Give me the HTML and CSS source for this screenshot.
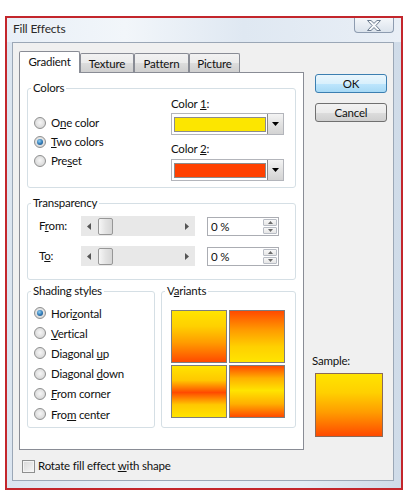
FILE: index.html
```html
<!DOCTYPE html>
<html>
<head>
<meta charset="utf-8">
<title>Fill Effects</title>
<link rel="stylesheet" href="styles.css">
</head>
<body>
<div class="window">
  <div class="titlebar">
    <span class="title">Fill Effects</span>
    <div class="close">
      <svg width="14" height="11" viewBox="0 0 14 11"><polygon points="0.5,0.5 4,0.5 7,3.4 10,0.5 13.5,0.5 8.9,5.5 13.5,10.5 10,10.5 7,7.6 4,10.5 0.5,10.5 5.1,5.5" fill="#f7f9fb" stroke="#6d7c90" stroke-width="1"/></svg>
    </div>
  </div>
  <div class="client">
    <div class="main">
      <div class="tabs">
        <div class="tab active">Gradient</div>
        <div class="tab t-texture">Texture</div>
        <div class="tab t-pattern">Pattern</div>
        <div class="tab t-picture">Picture</div>
      </div>
      <div class="panel">
        <fieldset class="group colors">
          <legend>Colors</legend>
          <div class="colors-body">
            <div class="radios">
              <div class="radio-row"><span class="radio"></span><span>O<u>n</u>e color</span></div>
              <div class="radio-row"><span class="radio checked"></span><span><u>T</u>wo colors</span></div>
              <div class="radio-row"><span class="radio"></span><span>Pre<u>s</u>et</span></div>
            </div>
            <div class="pickers">
              <div class="plabel">Color <u>1</u>:</div>
              <div class="combo">
                <div class="swatch yellow"></div>
                <div class="drop"><svg width="7" height="4" viewBox="0 0 7 4"><path d="M0 0h7L3.5 4z" fill="#000"/></svg></div>
              </div>
              <div class="plabel second">Color <u>2</u>:</div>
              <div class="combo combo2">
                <div class="swatch red"></div>
                <div class="drop"><svg width="7" height="4" viewBox="0 0 7 4"><path d="M0 0h7L3.5 4z" fill="#000"/></svg></div>
              </div>
            </div>
          </div>
        </fieldset>

        <fieldset class="group transparency">
          <legend>Transparency</legend>
          <div class="trows">
            <div class="trow">
              <span class="tlabel">F<u>r</u>om:</span>
              <div class="slider">
                <svg class="arr-l" width="4" height="7" viewBox="0 0 4 7"><path d="M4 0v7L0 3.5z" fill="#555"/></svg>
                <span class="thumb"></span>
                <svg class="arr-r" width="4" height="7" viewBox="0 0 4 7"><path d="M0 0v7L4 3.5z" fill="#555"/></svg>
              </div>
              <div class="spin">
                <span class="spin-text">0 %</span>
                <div class="spin-btns">
                  <span class="sb"><svg width="5" height="3" viewBox="0 0 5 3"><path d="M0 3h5L2.5 0z" fill="#6a6a6a"/></svg></span>
                  <span class="sb"><svg width="5" height="3" viewBox="0 0 5 3"><path d="M0 0h5L2.5 3z" fill="#6a6a6a"/></svg></span>
                </div>
              </div>
            </div>
            <div class="trow second">
              <span class="tlabel">T<u>o</u>:</span>
              <div class="slider">
                <svg class="arr-l" width="4" height="7" viewBox="0 0 4 7"><path d="M4 0v7L0 3.5z" fill="#555"/></svg>
                <span class="thumb"></span>
                <svg class="arr-r" width="4" height="7" viewBox="0 0 4 7"><path d="M0 0v7L4 3.5z" fill="#555"/></svg>
              </div>
              <div class="spin">
                <span class="spin-text">0 %</span>
                <div class="spin-btns">
                  <span class="sb"><svg width="5" height="3" viewBox="0 0 5 3"><path d="M0 3h5L2.5 0z" fill="#6a6a6a"/></svg></span>
                  <span class="sb"><svg width="5" height="3" viewBox="0 0 5 3"><path d="M0 0h5L2.5 3z" fill="#6a6a6a"/></svg></span>
                </div>
              </div>
            </div>
          </div>
        </fieldset>

        <div class="bottom-row">
          <fieldset class="group shading">
            <legend>Shading styles</legend>
            <div class="radios2">
              <div class="radio-row r2"><span class="radio checked"></span><span>Hori<u>z</u>ontal</span></div>
              <div class="radio-row r2"><span class="radio"></span><span><u>V</u>ertical</span></div>
              <div class="radio-row r2"><span class="radio"></span><span>Diagonal <u>u</u>p</span></div>
              <div class="radio-row r2"><span class="radio"></span><span>Diagonal <u>d</u>own</span></div>
              <div class="radio-row r2"><span class="radio"></span><span><u>F</u>rom corner</span></div>
              <div class="radio-row r2"><span class="radio"></span><span>Fro<u>m</u> center</span></div>
            </div>
          </fieldset>
          <fieldset class="group variants">
            <legend>V<u>a</u>riants</legend>
            <div class="tiles">
              <div class="tile v1"></div>
              <div class="tile v2"></div>
              <div class="tile v3"></div>
              <div class="tile v4"></div>
            </div>
          </fieldset>
        </div>
      </div>
      <div class="check"><span class="cbox"></span><span>Rotate fill effect <u>w</u>ith shape</span></div>
    </div>
    <div class="side">
      <div class="btn default">OK</div>
      <div class="btn cancel">Cancel</div>
      <div class="sample-label">Sample:</div>
      <div class="sample"></div>
    </div>
  </div>
</div>
</body>
</html>
```

FILE: styles.css
```css
* { box-sizing: border-box; }
html, body { margin: 0; padding: 0; background: #fff; }
body {
  width: 418px; height: 498px; overflow: hidden;
  font-family: Lato, "Noto Sans", sans-serif;
  font-size: 11.5px; letter-spacing: -0.2px; color: #111;
}
u { text-decoration: underline; text-decoration-thickness: 1px; text-underline-offset: 1px; }

.window {
  margin: 16px 0 0 5px;
  width: 398px; height: 474px;
  border: 2px solid #c3262c;
  padding: 0 7px 7px 5px;
  background: linear-gradient(to right, #dbe5f0 0, #ecf2f8 40%, #e4ecf4 75%, #cfdbe8 100%);
  display: flex; flex-direction: column;
}
.titlebar {
  height: 24px; flex: none;
  display: flex; align-items: flex-start;
  background: linear-gradient(to right, #e8eff7, #f2f6fa 30%, #dfe8f2 60%, #e9eff6);
  margin: 0 -7px 0 -5px; padding: 0 7px 0 6px;
}
.title { line-height: 21px; font-size: 12px; color: #2a2a2a; text-shadow: 0 0 6px #fff; }
.close {
  margin-left: auto; width: 40px; height: 15px;
  border: 1px solid #8d9cb0; border-top: none;
  border-radius: 0 0 4px 4px;
  background: linear-gradient(to bottom, #f4f7fa, #dbe3ec);
  display: flex; align-items: center; justify-content: center;
}

.client {
  width: 382px; height: 439px; flex: none;
  border: 1px solid #9ba7b6;
  background: #f0f0f0;
  padding: 0 6px;
  display: flex; gap: 8px;
}
.main { width: 285px; display: flex; flex-direction: column; }

.tabs { display: flex; align-items: flex-end; margin-top: 8px; height: 21px; }
.tab {
  height: 19px; padding-top: 1px;
  border: 1px solid #898c95; border-bottom: none;
  background: linear-gradient(to bottom, #f2f2f2, #ebebeb 50%, #dddddd 51%, #cfcfcf);
  text-align: center; line-height: 17px;
  border-radius: 2px 2px 0 0;
}
.tab.active {
  width: 61px; height: 22px; padding-top: 0;
  background: #fff; line-height: 20px;
  margin-bottom: -1px; position: relative; z-index: 1;
}
.t-texture { width: 54px; }
.t-pattern { width: 55px; }
.t-picture { width: 51px; }

.panel {
  width: 285px; height: 378px;
  border: 1px solid #898c95; background: #fff;
  padding: 8px 7px 0;
}

.group {
  margin: 0; padding: 0; min-width: 0;
  border: 1px solid #d5dfe5; border-radius: 3px;
}
.group legend { margin-left: 3px; padding: 0 2px; line-height: 14px; }

.colors-body { display: grid; grid-template-columns: 143px 1fr; height: 92px; }
.radios { padding: 18px 0 0 6px; }
.radio-row { height: 19px; display: flex; align-items: center; gap: 5px; }
.radio {
  width: 12px; height: 12px; border-radius: 50%; flex: none;
  border: 1px solid #8e8f8f;
  background: radial-gradient(circle at 50% 45%, #f6f6f6 0, #dedede 60%, #cdcdcd 100%);
  display: flex; align-items: center; justify-content: center;
}
.radio.checked::after {
  content: ""; width: 6px; height: 6px; border-radius: 50%;
  background: radial-gradient(circle at 40% 35%, #8fd0f5 0, #2f77b3 55%, #174a7c 100%);
}

.pickers { padding-top: 2px; }
.plabel { line-height: 14px; }
.plabel.second { margin-top: 7px; }
.combo {
  width: 113px; height: 22px; margin-top: 2px;
  border: 1px solid #b3b5bb; background: #fff;
  display: flex; align-items: stretch;
}
.combo2 { margin-top: 3px; }
.swatch { flex: 1; margin: 3px 1px 2px 2px; border: 1px solid #8c8c8c; }
.swatch.yellow { background: #fce600; }
.swatch.red { background: #ff4100; }
.drop {
  width: 16px; flex: none;
  border-left: 1px solid #8a8a8a;
  background: linear-gradient(to bottom, #f4f4f4, #e2e2e2 50%, #d3d3d3);
  display: flex; align-items: center; justify-content: center;
}

.transparency { margin-top: 8px; }
.trows { padding: 6px 0 13px 11px; }
.trow { display: grid; grid-template-columns: 42px 114px 72px; height: 20px; align-items: center; }
.trow.second { margin-top: 10px; }
.tlabel { line-height: 14px; }
.slider {
  height: 20px; background: #e8e8e8;
  display: flex; align-items: center;
  padding: 0 6px;
}
.thumb {
  width: 15px; height: 17px; margin-left: 7px;
  border: 1px solid #979797; border-radius: 2px;
  background: linear-gradient(to right, #f6f6f6, #e3e3e3 50%, #d6d6d6);
}
.arr-r { margin-left: auto; }
.spin {
  width: 72px; height: 19px; margin-left: 12px;
  border: 1px solid #abadb3; background: #fff;
  display: flex; align-items: stretch;
}
.spin-text { flex: 1; padding-left: 3px; line-height: 17px; }
.spin-btns { width: 15px; display: flex; flex-direction: column; padding: 1px 1px 1px 0; gap: 1px; }
.sb {
  flex: 1; border: 1px solid #b8bcc4; border-radius: 1px;
  background: linear-gradient(to bottom, #f7f7f7, #e6e6e6);
  display: flex; align-items: center; justify-content: center;
}

.bottom-row { display: flex; gap: 6px; margin-top: 4px; height: 144px; }
.shading { width: 128px; flex: none; }
.variants { flex: 1; }
.radios2 { padding: 5px 0 0 6px; }
.radio-row.r2 { height: 20.2px; }

.tiles {
  display: grid; grid-template-columns: 56px 56px; grid-template-rows: 53px 53px;
  gap: 2px; padding: 12px 0 0 9px;
}
.tile { border: 1px solid #7d7d7d; }
.v1 { background: linear-gradient(to bottom, #ffe400 0%, #ffd000 30%, #ff9c00 62%, #ff4a00 100%); }
.v2 { background: linear-gradient(to bottom, #ff4a00 0%, #ff9c00 38%, #ffd000 70%, #ffe400 100%); }
.v3 { background: linear-gradient(to bottom, #ffe400 0%, #ffc800 28%, #ff4a00 52%, #ffc800 76%, #ffe400 100%); }
.v4 { background: linear-gradient(to bottom, #ff4a00 0%, #ffb000 24%, #ffe400 48%, #ffb000 74%, #ff4a00 100%); }

.check { margin-top: 9px; padding-left: 3px; display: flex; align-items: center; gap: 3px; line-height: 14px; }
.cbox {
  width: 13px; height: 13px; flex: none;
  border: 1px solid #8e8f8f;
  background: linear-gradient(135deg, #d8d8d8, #f7f7f7);
  box-shadow: inset 0 0 0 1px #f4f4f4;
}

.side { width: 75px; padding-top: 31px; display: flex; flex-direction: column; align-items: flex-start; }
.btn {
  width: 72px; height: 19px; margin-left: 3px;
  border: 1px solid #707070; border-radius: 3px;
  background: linear-gradient(to bottom, #f2f2f2, #ebebeb 50%, #dddddd 51%, #cfcfcf);
  text-align: center; line-height: 17px;
}
.btn.default {
  border-color: #3c7fb1;
  background: linear-gradient(to bottom, #eaf6fd, #d9f0fc 50%, #bee6fd 51%, #a7d9f5);
}
.btn.cancel { margin-top: 10px; }
.sample-label { margin-top: 232px; line-height: 14px; }
.sample {
  width: 68px; height: 64px; margin: 5px 0 0 3px;
  border: 1px solid #8b6a58;
  background: linear-gradient(to bottom, #ffe400 0%, #ffd000 30%, #ff9c00 62%, #ff4a00 100%);
}
```
